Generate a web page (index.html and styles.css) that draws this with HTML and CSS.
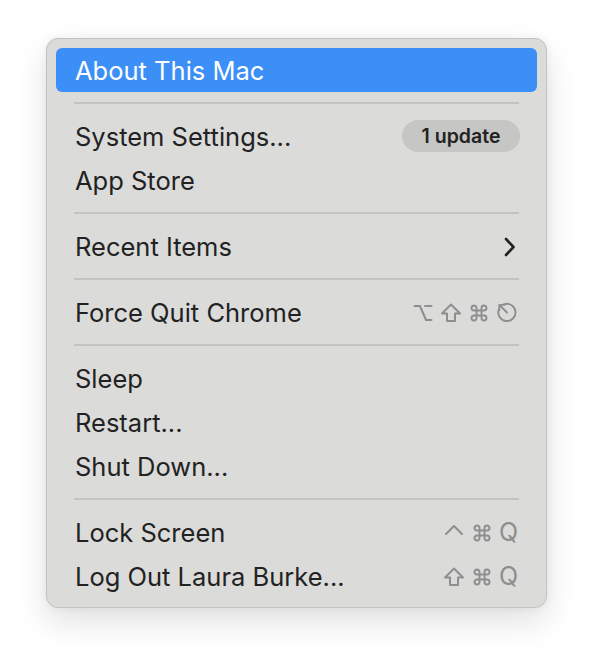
FILE: index.html
```html
<!DOCTYPE html>
<html>
<head>
<meta charset="utf-8">
<link rel="stylesheet" href="styles.css">
</head>
<body>
<div class="stage">
  <div class="menu">
    <div class="item active"><span class="label">About This Mac</span></div>
    <div class="sep"></div>
    <div class="item"><span class="label">System Settings...</span><span class="badge">1 update</span></div>
    <div class="item"><span class="label">App Store</span></div>
    <div class="sep"></div>
    <div class="item"><span class="label">Recent Items</span>
      <svg class="chev" width="14" height="20" viewBox="0 0 14 20"><path d="M3 2 L10.5 10 L3 18" fill="none" stroke="#222" stroke-width="2.6" stroke-linecap="round" stroke-linejoin="round"/></svg>
    </div>
    <div class="sep"></div>
    <div class="item"><span class="label">Force Quit Chrome</span>
      <span class="keys">
        <svg class="ic" width="20" height="20" viewBox="0 0 20 20"><path d="M1.5 3 H7 L13 17 H18.5 M12 3 H18.5" fill="none" stroke="#8e8e8e" stroke-width="2" stroke-linecap="round" stroke-linejoin="round"/></svg>
        <svg class="ic" width="22" height="20" viewBox="0 0 22 20"><path d="M11 1.5 L2 10.5 H7 V18 H15 V10.5 H20 Z" fill="none" stroke="#8e8e8e" stroke-width="2" stroke-linejoin="round"/></svg>
        <svg class="ic" width="20" height="20" viewBox="0 0 24 24"><path d="M15 6v12a3 3 0 1 0 3-3H6a3 3 0 1 0 3 3V6a3 3 0 1 0-3 3h12a3 3 0 1 0-3-3" fill="none" stroke="#8e8e8e" stroke-width="2.3" stroke-linecap="round" stroke-linejoin="round"/></svg>
        <svg class="ic" width="22" height="21" viewBox="0 0 22 22"><path d="M7.5 2.6 A9 9 0 1 1 2.6 7.5" fill="none" stroke="#8e8e8e" stroke-width="2" stroke-linecap="round"/><path d="M11 11 L3.2 3.2" stroke="#8e8e8e" stroke-width="2" stroke-linecap="round"/><path d="M3 8.5 L3 3 L8.5 3" fill="none" stroke="#8e8e8e" stroke-width="2" stroke-linecap="round" stroke-linejoin="round"/></svg>
      </span>
    </div>
    <div class="sep"></div>
    <div class="item"><span class="label">Sleep</span></div>
    <div class="item"><span class="label">Restart...</span></div>
    <div class="item"><span class="label">Shut Down...</span></div>
    <div class="sep"></div>
    <div class="item"><span class="label">Lock Screen</span>
      <span class="keys">
        <svg class="ic ctrl" width="22" height="20" viewBox="0 0 22 20"><path d="M3 11 L11 3 L19 11" fill="none" stroke="#8e8e8e" stroke-width="2" stroke-linecap="round" stroke-linejoin="round"/></svg>
        <svg class="ic" width="20" height="20" viewBox="0 0 24 24"><path d="M15 6v12a3 3 0 1 0 3-3H6a3 3 0 1 0 3 3V6a3 3 0 1 0-3 3h12a3 3 0 1 0-3-3" fill="none" stroke="#8e8e8e" stroke-width="2.3" stroke-linecap="round" stroke-linejoin="round"/></svg>
        <span class="q">Q</span>
      </span>
    </div>
    <div class="item"><span class="label">Log Out Laura Burke...</span>
      <span class="keys">
        <svg class="ic" width="22" height="20" viewBox="0 0 22 20"><path d="M11 1.5 L2 10.5 H7 V18 H15 V10.5 H20 Z" fill="none" stroke="#8e8e8e" stroke-width="2" stroke-linejoin="round"/></svg>
        <svg class="ic" width="20" height="20" viewBox="0 0 24 24"><path d="M15 6v12a3 3 0 1 0 3-3H6a3 3 0 1 0 3 3V6a3 3 0 1 0-3 3h12a3 3 0 1 0-3-3" fill="none" stroke="#8e8e8e" stroke-width="2.3" stroke-linecap="round" stroke-linejoin="round"/></svg>
        <span class="q">Q</span>
      </span>
    </div>
  </div>
</div>
</body>
</html>
```
FILE: styles.css
```css
html, body {
  margin: 0;
  padding: 0;
  background: #ffffff;
}
.stage {
  width: 592px;
  height: 662px;
  padding: 38px 0 0 46px;
  box-sizing: border-box;
}
.menu {
  width: 501px;
  box-sizing: border-box;
  padding: 9px;
  background: #dbdbda;
  border: 1px solid #c2c2c1;
  border-radius: 12px;
  box-shadow: 0 14px 32px rgba(0,0,0,0.12), 0 0 8px rgba(0,0,0,0.06);
  font-family: "Inter", "Noto Sans", sans-serif;
  color: #222222;
}
.item {
  height: 44px;
  display: flex;
  align-items: center;
  justify-content: space-between;
  padding: 1px 19px 0 19px;
  box-sizing: border-box;
  border-radius: 6px;
  font-size: 25.5px;
  letter-spacing: 0;
}
.item.active {
  background: #3b8ff6;
  color: #ffffff;
}
.sep {
  height: 2px;
  margin: 10px 18px;
  background: #c3c3c2;
}
.badge {
  height: 32px;
  width: 118px;
  box-sizing: border-box;
  justify-content: center;
  border-radius: 16px;
  background: #c6c6c5;
  font-size: 19.5px;
  font-weight: 600;
  display: flex;
  align-items: center;
  margin-right: -2px;
  margin-top: -1px;
}
.chev {
  margin-right: 1px;
}
.keys {
  display: flex;
  align-items: center;
  gap: 7px;
  color: #8e8e8e;
}
.ic {
  display: block;
}
.q {
  font-size: 25px;
  line-height: 1;
  color: #8e8e8e;
}
```
